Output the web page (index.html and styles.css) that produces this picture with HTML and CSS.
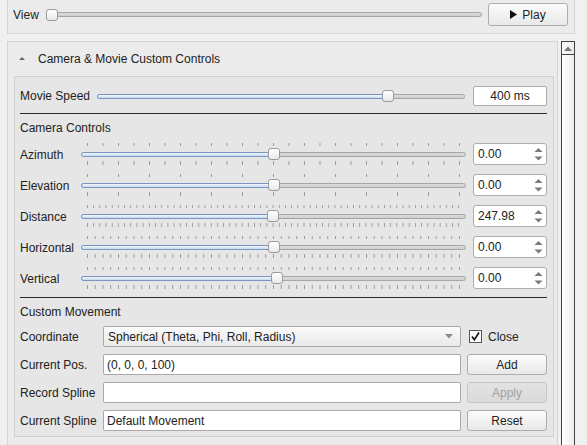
FILE: index.html
```html
<!DOCTYPE html>
<html>
<head>
<meta charset="utf-8">
<title>Camera Controls</title>
<link rel="stylesheet" href="styles.css">
</head>
<body>
<div class="top">
  <span class="view-lbl">View</span>
  <div class="hslider plain view-slider">
    <div class="track"></div>
    <div class="handle" style="left:0px"></div>
  </div>
  <button class="btn play"><svg class="play-ic" width="7" height="9" viewBox="0 0 7 9"><path d="M0 0 L7 4.5 L0 9 Z" fill="#111"/></svg>Play</button>
</div>

<div class="main">
  <div class="outer">
    <div class="hdr"><span class="caret"></span>Camera &amp; Movie Custom Controls</div>
    <div class="inner">
      <div class="row movie-row">
        <span class="lbl w-movie">Movie Speed</span>
        <div class="hslider plain movie-slider">
          <div class="track"><div class="fill" style="width:292px"></div></div>
          <div class="handle" style="left:285px"></div>
        </div>
        <div class="textbox center">400 ms</div>
      </div>
      <div class="sep sep1"></div>
      <div class="section">Camera Controls</div>
      <div class="cam-rows">
        <div class="row cam-row">
          <span class="lbl w-cam">Azimuth</span>
          <div class="hslider ticked">
            <div class="ticks t-az"></div>
            <div class="track"><div class="fill" style="width:192px"></div></div>
            <div class="ticks t-az"></div>
            <div class="handle" style="left:187px"></div>
          </div>
          <div class="spin"><span class="val">0.00</span><svg class="arr" width="9" height="16" viewBox="0 0 9 16"><path d="M0.5 6 L4.5 2 L8.5 6 Z M0.5 10.5 L4.5 14.5 L8.5 10.5 Z" fill="#7a7a7a"/></svg></div>
        </div>
        <div class="row cam-row">
          <span class="lbl w-cam">Elevation</span>
          <div class="hslider ticked">
            <div class="ticks t-el"></div>
            <div class="track"><div class="fill" style="width:192px"></div></div>
            <div class="ticks t-el"></div>
            <div class="handle" style="left:187px"></div>
          </div>
          <div class="spin"><span class="val">0.00</span><svg class="arr" width="9" height="16" viewBox="0 0 9 16"><path d="M0.5 6 L4.5 2 L8.5 6 Z M0.5 10.5 L4.5 14.5 L8.5 10.5 Z" fill="#7a7a7a"/></svg></div>
        </div>
        <div class="row cam-row">
          <span class="lbl w-cam">Distance</span>
          <div class="hslider ticked">
            <div class="ticks t-dist"></div>
            <div class="track"><div class="fill" style="width:192px"></div></div>
            <div class="ticks t-dist"></div>
            <div class="handle" style="left:186px"></div>
          </div>
          <div class="spin"><span class="val">247.98</span><svg class="arr" width="9" height="16" viewBox="0 0 9 16"><path d="M0.5 6 L4.5 2 L8.5 6 Z M0.5 10.5 L4.5 14.5 L8.5 10.5 Z" fill="#7a7a7a"/></svg></div>
        </div>
        <div class="row cam-row">
          <span class="lbl w-cam">Horizontal</span>
          <div class="hslider ticked">
            <div class="ticks t-hv"></div>
            <div class="track"><div class="fill" style="width:192px"></div></div>
            <div class="ticks t-hv"></div>
            <div class="handle" style="left:187px"></div>
          </div>
          <div class="spin"><span class="val">0.00</span><svg class="arr" width="9" height="16" viewBox="0 0 9 16"><path d="M0.5 6 L4.5 2 L8.5 6 Z M0.5 10.5 L4.5 14.5 L8.5 10.5 Z" fill="#7a7a7a"/></svg></div>
        </div>
        <div class="row cam-row">
          <span class="lbl w-cam">Vertical</span>
          <div class="hslider ticked">
            <div class="ticks t-hv"></div>
            <div class="track"><div class="fill" style="width:195px"></div></div>
            <div class="ticks t-hv"></div>
            <div class="handle" style="left:190px"></div>
          </div>
          <div class="spin"><span class="val">0.00</span><svg class="arr" width="9" height="16" viewBox="0 0 9 16"><path d="M0.5 6 L4.5 2 L8.5 6 Z M0.5 10.5 L4.5 14.5 L8.5 10.5 Z" fill="#7a7a7a"/></svg></div>
        </div>
      </div>
      <div class="sep sep2"></div>
      <div class="section">Custom Movement</div>
      <div class="custom">
        <div class="row crow">
          <span class="lbl w-cust">Coordinate</span>
          <div class="combo"><span class="combo-txt">Spherical (Theta, Phi, Roll, Radius)</span><svg width="8" height="5" viewBox="0 0 8 5"><path d="M0 0 L8 0 L4 4.5 Z" fill="#8a8a8a"/></svg></div>
          <div class="check-wrap">
            <span class="checkbox"><svg width="11" height="11" viewBox="0 0 11 11"><path d="M2 5.5 L4.3 8.8 L9 1.5" stroke="#111" stroke-width="1.6" fill="none"/></svg></span>
            <span class="close-lbl">Close</span>
          </div>
        </div>
        <div class="row crow">
          <span class="lbl w-cust">Current Pos.</span>
          <div class="field">(0, 0, 0, 100)</div>
          <button class="btn side">Add</button>
        </div>
        <div class="row crow">
          <span class="lbl w-cust">Record Spline</span>
          <div class="field"></div>
          <button class="btn side disabled">Apply</button>
        </div>
        <div class="row crow">
          <span class="lbl w-cust">Current Spline</span>
          <div class="field">Default Movement</div>
          <button class="btn side">Reset</button>
        </div>
      </div>
    </div>
  </div>
  <div class="scrollbar">
    <div class="sb-up"><svg width="8" height="5" viewBox="0 0 8 5"><path d="M0 5 L4 0.5 L8 5 Z" fill="#777"/></svg></div>
    <div class="sb-track"></div>
  </div>
</div>
</body>
</html>
```

FILE: styles.css
```css
html, body {
  margin: 0;
  padding: 0;
}
body {
  width: 587px;
  height: 445px;
  overflow: hidden;
  background: #f0f0f0;
  font-family: "Liberation Sans", Arial, sans-serif;
  font-size: 12px;
  color: #222;
}

/* top bar */
.top {
  box-sizing: border-box;
  margin-left: 7px;
  width: 568px;
  height: 34px;
  background: #ebebeb;
  border: 1px solid #d6d6d6;
  border-top: none;
  display: flex;
  align-items: center;
  padding: 3px 6px 7px 5px;
}
.view-lbl {
  width: 26px;
  margin-right: 7px;
  line-height: 14px;
}
.view-slider {
  flex: 1;
  height: 23px;
  margin-right: 6px;
}
.play {
  width: 80px;
  height: 23px;
  border-color: #8fa3bd;
  background: linear-gradient(#f6f8fb, #e2e6ec);
}
.play-ic {
  margin-right: 5px;
  vertical-align: -1px;
}

/* generic slider */
.hslider {
  position: relative;
  display: flex;
  flex-direction: column;
}
.hslider.plain {
  justify-content: center;
}
.track {
  position: relative;
  box-sizing: border-box;
  height: 5px;
  border: 1px solid #a5a5a5;
  border-radius: 3px;
  background: linear-gradient(#dcdcdc, #cfcfcf);
}
.fill {
  position: absolute;
  left: -1px;
  top: -1px;
  bottom: -1px;
  box-sizing: border-box;
  border: 1px solid #7896bf;
  border-radius: 3px;
  background: linear-gradient(#f1f6fc, #c8daf0);
}
.handle {
  position: absolute;
  top: 50%;
  margin-top: -6px;
  box-sizing: border-box;
  width: 12px;
  height: 12px;
  border: 1px solid #9b9b9b;
  border-radius: 3px;
  background: linear-gradient(#ffffff, #e9e9e9);
}
.ticked {
  flex: 1;
  height: 31px;
  margin-right: 7px;
}
.ticked .handle {
  top: 9px;
  margin-top: 0;
}
.ticks {
  height: 4px;
  margin: 0 6px;
  background-image: linear-gradient(to right, #9a9a9a 0, #9a9a9a 1px, transparent 1px);
  background-repeat: repeat-x;
  background-position: 0 0;
}
.ticked .ticks:first-child {
  margin-top: 4px;
  height: 3px;
}
.ticked .track {
  margin-top: 6px;
}
.ticked .ticks:nth-child(3) {
  margin-top: 4px;
}
.t-az { background-size: 15.5px 100%; }
.t-el { background-size: 31px 100%; }
.t-dist { background-size: 6.2px 100%; }
.t-hv { background-size: 7.75px 100%; }

/* main area */
.main {
  display: flex;
  margin-top: 7px;
}
.outer {
  box-sizing: border-box;
  margin-left: 7px;
  width: 551px;
  height: 420px;
  background: #ebebeb;
  border: 1px solid #d4d4d4;
  border-bottom: none;
  padding-left: 6px;
}
.hdr {
  height: 34px;
  display: flex;
  align-items: center;
  padding-left: 5px;
  color: #222;
}
.caret {
  width: 0;
  height: 0;
  border-left: 3px solid transparent;
  border-right: 3px solid transparent;
  border-bottom: 3px solid #666;
  margin-right: 13px;
  margin-top: -1px;
}
.inner {
  box-sizing: border-box;
  width: 540px;
  background: #e6e6e6;
  border: 1px solid #d0d0d0;
  padding: 9px 6px 5px 5px;
}
.row {
  display: flex;
  align-items: center;
}
.lbl {
  flex: none;
  white-space: nowrap;
}
.w-movie { width: 77px; }
.w-cam { width: 61px; }
.w-cust { width: 83px; }

.movie-row {
  height: 20px;
}
.movie-slider {
  flex: 1;
  height: 20px;
  margin-right: 8px;
}
.textbox {
  box-sizing: border-box;
  width: 74px;
  height: 20px;
  background: #fff;
  border: 1px solid #abadb3;
  border-radius: 2px;
  display: flex;
  align-items: center;
  justify-content: center;
  color: #222;
}

.sep {
  height: 1px;
  background: #2b2b2b;
}
.sep1 { margin-top: 7px; }
.sep2 { margin-top: 3px; }
.section {
  margin-top: 7px;
  line-height: 14px;
  height: 14px;
}
.cam-rows {
  margin-top: 4px;
}
.cam-row {
  height: 31px;
}
.spin {
  box-sizing: border-box;
  width: 74px;
  height: 22px;
  margin-top: -1px;
  background: #fff;
  border: 1px solid #abadb3;
  border-radius: 3px;
  display: flex;
  align-items: center;
  padding-left: 4px;
  padding-right: 3px;
}
.spin .val {
  flex: 1;
}

.custom {
  margin-top: 7px;
  display: flex;
  flex-direction: column;
  gap: 7px;
}
.crow {
  height: 21px;
}
.combo {
  box-sizing: border-box;
  width: 358px;
  height: 21px;
  border: 1px solid #a9a9a9;
  border-radius: 2px;
  background: linear-gradient(#fbfbfb, #e9e9e9);
  display: flex;
  align-items: center;
  padding-left: 4px;
  padding-right: 7px;
}
.combo-txt {
  flex: 1;
}
.check-wrap {
  display: flex;
  align-items: center;
  margin-left: 8px;
}
.checkbox {
  box-sizing: border-box;
  width: 13px;
  height: 13px;
  border: 1px solid #555;
  background: #fff;
  display: flex;
  align-items: center;
  justify-content: center;
}
.close-lbl {
  margin-left: 6px;
}
.field {
  box-sizing: border-box;
  width: 358px;
  height: 21px;
  margin-right: 6px;
  background: #fff;
  border: 1px solid #a9a9a9;
  border-radius: 2px;
  display: flex;
  align-items: center;
  padding-left: 3px;
}

/* buttons */
.btn {
  box-sizing: border-box;
  font-family: "Liberation Sans", Arial, sans-serif;
  font-size: 12px;
  color: #222;
  border: 1px solid #adadad;
  border-radius: 3px;
  background: linear-gradient(#fcfcfc, #e8e8e8);
  padding: 0;
  display: flex;
  align-items: center;
  justify-content: center;
}
.side {
  width: 80px;
  height: 21px;
}
.disabled {
  color: #a3a3a3;
  border-color: #c6c6c6;
  background: linear-gradient(#e3e3e3, #d9d9d9);
}

/* scrollbar */
.scrollbar {
  box-sizing: border-box;
  margin-left: 3px;
  width: 14px;
  height: 404px;
  border: 1px solid #444;
  border-bottom: none;
  display: flex;
  flex-direction: column;
}
.sb-up {
  height: 12px;
  border-bottom: 1px solid #444;
  background: linear-gradient(to right, #fafafa, #ececec);
  display: flex;
  align-items: center;
  justify-content: center;
}
.sb-track {
  flex: 1;
  background: linear-gradient(to right, #ffffff, #ececec);
}
```
